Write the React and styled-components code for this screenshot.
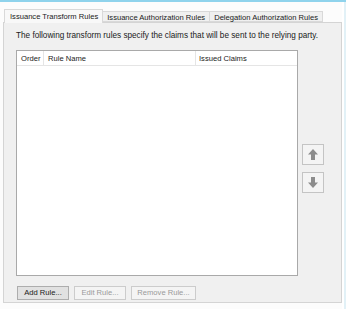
import React from "react";
import styled, { createGlobalStyle } from "styled-components";

const Global = createGlobalStyle`
  html, body { margin: 0; padding: 0; background: #fcfcfc; }
  #root { width: 346px; height: 309px; }
`;

const Window = styled.div`
  width: 346px;
  height: 309px;
  display: flex;
  flex-direction: column;
  font-family: "Liberation Sans", Arial, sans-serif;
  font-size: 7.6px;
  color: #1a1a1a;
  background: #fcfcfc;
  overflow: hidden;
`;

const TopLine = styled.div`
  height: 2px;
  background: #8fd3ec;
  flex: none;
`;

const Body = styled.div`
  flex: 1;
  display: flex;
`;

const Content = styled.div`
  width: 339px;
  padding: 7px 0 0 3px;
  display: flex;
  flex-direction: column;
`;

const RightEdge = styled.div`
  flex: 1;
  border-left: 2px solid #ffffff;
  background: #e2f1f7;
`;

const TabRow = styled.div`
  display: flex;
  align-items: flex-end;
  height: 13px;
  padding-left: 1px;
  position: relative;
  z-index: 1;
`;

const Tab = styled.div`
  box-sizing: border-box;
  height: ${(p) => (p.$active ? "14px" : "11px")};
  margin-bottom: ${(p) => (p.$active ? "-1px" : "0")};
  padding: ${(p) => (p.$active ? "2px 4px 0 5px" : "1px 4px 0 4px")};
  border: 1px solid #d9d9d9;
  border-bottom: ${(p) => (p.$active ? "none" : "1px solid #d9d9d9")};
  border-left: ${(p) => (p.$first ? "1px solid #d9d9d9" : "none")};
  background: ${(p) => (p.$active ? "#f8f8f8" : "#f0f0f0")};
  white-space: nowrap;
  line-height: 9px;
`;

const Panel = styled.div`
  box-sizing: border-box;
  width: 339px;
  height: 281px;
  border: 1px solid #d4d4d4;
  background: #f0f0f0;
  padding: 8px 0 0 12px;
  display: flex;
  flex-direction: column;
`;

const Description = styled.div`
  font-size: 8.2px;
  line-height: 10px;
  white-space: nowrap;
`;

const MainRow = styled.div`
  display: flex;
  margin-top: 9px;
  gap: 4px;
`;

const ListView = styled.div`
  box-sizing: border-box;
  width: 282px;
  height: 226px;
  border: 1px solid #a9a9a9;
  background: #ffffff;
  display: flex;
  flex-direction: column;
`;

const Header = styled.div`
  display: grid;
  grid-template-columns: 27px 152px 1fr;
  height: 14px;
  border-bottom: 1px solid #e5e5e5;
`;

const HeaderCell = styled.div`
  display: flex;
  align-items: center;
  padding-left: ${(p) => p.$pad || 4}px;
  border-right: 1px solid ${(p) => (p.$last ? "transparent" : "#e5e5e5")};
  white-space: nowrap;
`;

const SideColumn = styled.div`
  display: flex;
  flex-direction: column;
  gap: 7px;
  padding-top: 94px;
`;

const ArrowButton = styled.div`
  box-sizing: border-box;
  width: 22px;
  height: 21px;
  border: 1px solid #c4c4c4;
  background: #f4f4f4;
  display: flex;
  align-items: center;
  justify-content: center;
`;

const ButtonRow = styled.div`
  display: flex;
  gap: 5px;
  margin-top: 10px;
  padding-left: 1px;
`;

const Button = styled.div`
  box-sizing: border-box;
  width: ${(p) => p.$w}px;
  height: 14px;
  border: 1px solid ${(p) => (p.$disabled ? "#cccccc" : "#adadad")};
  background: ${(p) => (p.$disabled ? "#f4f4f4" : "#e1e1e1")};
  color: ${(p) => (p.$disabled ? "#9a9a9a" : "#1a1a1a")};
  display: flex;
  align-items: center;
  justify-content: center;
  white-space: nowrap;
  line-height: 10px;
`;

const Arrow = ({ down }) => (
  <svg width="10" height="11" viewBox="0 0 10 11" style={down ? { transform: "rotate(180deg)" } : undefined}>
    <path d="M5 0 L10 5.5 L7 5.5 L7 11 L3 11 L3 5.5 L0 5.5 Z" fill="#8c8c8c" />
  </svg>
);

export default function App() {
  return (
    <>
      <Global />
      <Window>
        <TopLine />
        <Body>
          <Content>
            <TabRow>
              <Tab $active $first>Issuance Transform Rules</Tab>
              <Tab>Issuance Authorization Rules</Tab>
              <Tab>Delegation Authorization Rules</Tab>
            </TabRow>
            <Panel>
              <Description>
                The following transform rules specify the claims that will be sent to the relying party.
              </Description>
              <MainRow>
                <ListView>
                  <Header>
                    <HeaderCell>Order</HeaderCell>
                    <HeaderCell>Rule Name</HeaderCell>
                    <HeaderCell $last $pad={3}>Issued Claims</HeaderCell>
                  </Header>
                </ListView>
                <SideColumn>
                  <ArrowButton><Arrow /></ArrowButton>
                  <ArrowButton><Arrow down /></ArrowButton>
                </SideColumn>
              </MainRow>
              <ButtonRow>
                <Button $w={52}>Add Rule...</Button>
                <Button $w={52} $disabled>Edit Rule...</Button>
                <Button $w={65} $disabled>Remove Rule...</Button>
              </ButtonRow>
            </Panel>
          </Content>
          <RightEdge />
        </Body>
      </Window>
    </>
  );
}
